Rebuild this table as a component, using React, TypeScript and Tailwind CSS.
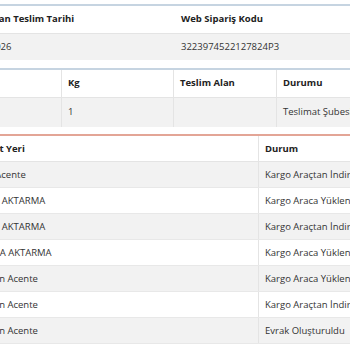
const hops = [
  ["Gebze Acente", "Kargo Araçtan İndirildi"],
  ["TRAKYA AKTARMA", "Kargo Araca Yüklendi"],
  ["TRAKYA AKTARMA", "Kargo Araçtan İndirildi"],
  ["ANTALYA AKTARMA", "Kargo Araca Yüklendi"],
  ["Çağlayan Acente", "Kargo Araca Yüklendi"],
  ["Çağlayan Acente", "Kargo Araçtan İndirildi"],
  ["Çağlayan Acente", "Evrak Oluşturuldu"],
];

const App = () => {
  return (
    <div
      className="w-[350px] h-[350px] overflow-hidden bg-white pt-[4px] text-[9.5px] text-[#333]"
      style={{ fontFamily: '"Open Sans", "Noto Sans", sans-serif' }}
    >
      {/* Gönderi özeti */}
      <div className="ml-[-43px] w-[460px] border-t-2 border-[#c6d4e1]">
        <div className="grid grid-cols-[218px_242px] h-[28px] items-center border-b border-[#e4e4e4] font-bold text-[#222]">
          <div className="px-[6px] whitespace-nowrap">Planlanan Teslim Tarihi</div>
          <div className="px-[6px] whitespace-nowrap">Web Sipariş Kodu</div>
        </div>
        <div className="grid grid-cols-[218px_242px] h-[26px] items-center bg-[#f2f2f2]">
          <div className="px-[6px]">12.01.2026</div>
          <div className="px-[6px]">3223974522127824P3</div>
        </div>
      </div>

      {/* Paket bilgisi */}
      <div className="mt-[8px] ml-[-60px] w-[480px] border-t-2 border-[#c6d4e1]">
        <div className="grid grid-cols-[122px_112px_103px_143px] h-[28px] items-center font-bold text-[#222] border-b border-[#e4e4e4]">
          <div className="px-[6px] h-full flex items-center border-r border-[#e4e4e4]">Desi</div>
          <div className="px-[6px] h-full flex items-center border-r border-[#e4e4e4]">Kg</div>
          <div className="px-[6px] h-full flex items-center border-r border-[#e4e4e4]">Teslim Alan</div>
          <div className="px-[6px] h-full flex items-center">Durumu</div>
        </div>
        <div className="grid grid-cols-[122px_112px_103px_143px] h-[29px] items-center bg-[#f2f2f2]">
          <div className="px-[6px] h-full flex items-center border-r border-[#e4e4e4]">1</div>
          <div className="px-[6px] h-full flex items-center border-r border-[#e4e4e4]">1</div>
          <div className="px-[6px] h-full flex items-center border-r border-[#e4e4e4]"></div>
          <div className="px-[6px] h-full flex items-center whitespace-nowrap">Teslimat Şubesinde</div>
        </div>
      </div>

      {/* Hareketler */}
      <div className="mt-[7px] ml-[-41px] w-[520px] border-t-2 border-[#e3a596]">
        <div className="grid grid-cols-[300px_220px] h-[26px] items-center font-bold text-[#222] border-b border-[#e4e4e4]">
          <div className="px-[6px] pt-[2px] h-full flex items-center border-r border-[#e4e4e4] whitespace-nowrap">Hareket Yeri</div>
          <div className="px-[6px] pt-[2px] h-full flex items-center">Durum</div>
        </div>
        {hops.map(([place, status], i) => (
          <div
            key={i}
            className={`grid grid-cols-[300px_220px] h-[26px] items-center border-b border-[#e8e8e8] ${i % 2 === 0 ? "bg-[#f2f2f2]" : "bg-white"}`}
          >
            <div className="px-[6px] pt-[2px] h-full flex items-center border-r border-[#e4e4e4] whitespace-nowrap">{place}</div>
            <div className="px-[6px] pt-[2px] h-full flex items-center whitespace-nowrap">{status}</div>
          </div>
        ))}
      </div>
    </div>
  );
};

export default App;
